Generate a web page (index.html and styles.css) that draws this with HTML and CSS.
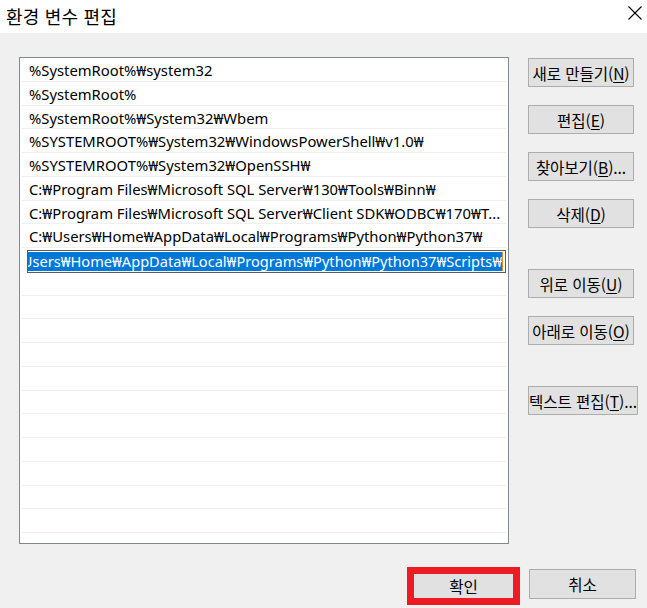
FILE: index.html
```html
<!DOCTYPE html>
<html lang="ko">
<head>
<meta charset="utf-8">
<title>환경 변수 편집</title>
<link rel="stylesheet" href="styles.css">
</head>
<body>
<div class="window">
  <div class="titlebar">
    <span class="title">환경 변수 편집</span>
    <span class="close"><svg width="14" height="14" viewBox="0 0 14 14"><path d="M0.5 0.5 L13.5 13.5 M13.5 0.5 L0.5 13.5" stroke="#000" stroke-width="1.1" fill="none"/></svg></span>
  </div>
  <div class="content">
    <div class="main">
      <div class="list">
        <div class="row">%SystemRoot%₩system32</div>
        <div class="row">%SystemRoot%</div>
        <div class="row">%SystemRoot%₩System32₩Wbem</div>
        <div class="row">%SYSTEMROOT%₩System32₩WindowsPowerShell₩v1.0₩</div>
        <div class="row">%SYSTEMROOT%₩System32₩OpenSSH₩</div>
        <div class="row">C:₩Program Files₩Microsoft SQL Server₩130₩Tools₩Binn₩</div>
        <div class="row">C:₩Program Files₩Microsoft SQL Server₩Client SDK₩ODBC₩170₩T...</div>
        <div class="row">C:₩Users₩Home₩AppData₩Local₩Programs₩Python₩Python37₩</div>
        <div class="row edit-row">
          <div class="editbox"><span class="sel">C:₩Users₩Home₩AppData₩Local₩Programs₩Python₩Python37₩Scripts₩</span><span class="caret"></span></div>
        </div>
        <div class="row"></div>
        <div class="row"></div>
        <div class="row"></div>
        <div class="row"></div>
        <div class="row"></div>
        <div class="row"></div>
        <div class="row"></div>
        <div class="row"></div>
        <div class="row"></div>
        <div class="row"></div>
        <div class="row"></div>
        <div class="row"></div>
      </div>
      <div class="side">
        <div class="btn">새로 만들기(<u>N</u>)</div>
        <div class="btn">편집(<u>E</u>)</div>
        <div class="btn">찾아보기(<u>B</u>)...</div>
        <div class="btn">삭제(<u>D</u>)</div>
        <div class="btn gap-big">위로 이동(<u>U</u>)</div>
        <div class="btn">아래로 이동(<u>O</u>)</div>
        <div class="btn gap-big wide">텍스트 편집(<u>T</u>)...</div>
      </div>
    </div>
    <div class="footer">
      <div class="ok-mark"><div class="ok-inner">확인</div></div>
      <div class="btn cancel">취소</div>
    </div>
  </div>
</div>
</body>
</html>
```
FILE: styles.css
```css
html, body {
  margin: 0;
  padding: 0;
}
body {
  background: #f0f0f0;
  font-family: "Noto Sans", "Noto Sans CJK KR", sans-serif;
  color: #000;
  width: 647px;
  height: 608px;
  overflow: hidden;
}
.window {
  display: flex;
  flex-direction: column;
}
.titlebar {
  height: 33px;
  background: #fff;
  display: flex;
  align-items: center;
  justify-content: space-between;
  padding: 0 5px 2px 6px;
  box-sizing: border-box;
}
.title {
  font-family: "Noto Sans CJK KR", sans-serif;
  font-size: 18px;
  line-height: 20px;
  letter-spacing: 0.2px;
}
.close {
  width: 14px;
  height: 14px;
  margin-top: -6px;
  display: flex;
}
.content {
  padding: 24px 0 0 19px;
}
.main {
  display: flex;
  align-items: flex-start;
}
.list {
  width: 490px;
  height: 487px;
  box-sizing: border-box;
  border: 1px solid #828790;
  background: #fff;
  overflow: hidden;
}
.row {
  height: 23.75px;
  box-sizing: border-box;
  margin: 0 2px;
  border-bottom: 1px solid #f0f0f0;
  padding: 1px 0 0 7px;
  font-size: 14.8px;
  line-height: 22px;
  white-space: nowrap;
  overflow: hidden;
}
.edit-row {
  padding: 0;
  overflow: visible;
  position: relative;
  border-bottom-color: transparent;
}
.editbox {
  position: absolute;
  left: 5px;
  right: 0;
  top: 2px;
  height: 23px;
  box-sizing: border-box;
  border: 1px solid #5a5a5a;
  padding: 1px 1px 1px 2px;
  background: #fff;
  display: flex;
  justify-content: flex-end;
  overflow: hidden;
}
.sel {
  background: #0078d7;
  color: #fff;
  font-size: 14.6px;
  line-height: 19px;
  white-space: nowrap;
  flex: none;
}
.caret {
  width: 1px;
  flex: none;
  background: #e08a2a;
  margin-right: 1px;
}
.side {
  display: flex;
  flex-direction: column;
  gap: 18px;
  margin-left: 19px;
  margin-top: 1px;
}
.btn {
  width: 106px;
  height: 29px;
  box-sizing: border-box;
  border: 1px solid #adadad;
  background: #e1e1e1;
  display: flex;
  align-items: center;
  justify-content: center;
  font-family: "Noto Sans CJK KR", sans-serif;
  font-size: 15.6px;
  white-space: nowrap;
  letter-spacing: -0.1px;
}
.btn u {
  text-underline-offset: 2px;
}
.gap-big {
  margin-top: 23px;
}
.wide {
  width: 110px;
}
.footer {
  display: flex;
  align-items: flex-start;
  margin-top: 23px;
  padding-left: 388px;
}
.ok-mark {
  width: 113px;
  height: 38px;
  box-sizing: border-box;
  border: 7px solid #ed1c24;
  background: #e1e1e1;
  display: flex;
  align-items: center;
  justify-content: center;
  font-family: "Noto Sans CJK KR", sans-serif;
  font-size: 15.6px;
}
.ok-inner {
  line-height: 20px;
}
.cancel {
  margin-left: 9px;
  margin-top: 2px;
  width: 107px;
  height: 30px;
}
```
